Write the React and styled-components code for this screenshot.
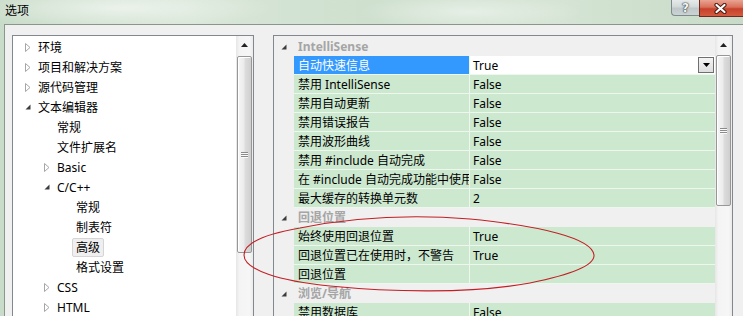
import React from 'react';
import styled, { createGlobalStyle } from 'styled-components';

const GlobalStyle = createGlobalStyle`
  html, body { margin: 0; padding: 0; overflow: hidden; }
  body {
    font-family: "Noto Sans", "Noto Sans CJK SC", sans-serif;
    font-size: 12px;
    color: #000;
  }
  * { box-sizing: border-box; }
`;

const Window = styled.div`
  position: relative;
  width: 743px;
  height: 316px;
  overflow: hidden;
  display: flex;
  flex-direction: column;
  background:
    radial-gradient(ellipse 220px 30px at 120px 8px, rgba(255,255,255,0.55), rgba(255,255,255,0) 70%),
    radial-gradient(ellipse 160px 26px at 470px 12px, rgba(255,255,255,0.45), rgba(255,255,255,0) 70%),
    linear-gradient(90deg, #c9dcc9 0%, #d8e6d7 25%, #cfe0cf 50%, #d5e4d4 75%, #c8dbc8 100%);
`;

const TitleBar = styled.div`
  height: 24px;
  flex: none;
  display: flex;
  align-items: flex-start;
`;

const Title = styled.div`
  padding: 3px 0 0 5px;
  font-size: 12px;
  line-height: 16px;
  color: #000;
`;

const CaptionButtons = styled.div`
  margin-left: auto;
  display: flex;
`;

const HelpButton = styled.div`
  width: 28px;
  height: 16px;
  border: 1px solid #7d8b8c;
  border-top: none;
  border-right: none;
  border-radius: 0 0 0 4px;
  background: linear-gradient(180deg, #e6eaea 0%, #d3d9da 45%, #bfc7c8 55%, #ccd3d4 100%);
  display: flex;
  align-items: center;
  justify-content: center;
  font-family: "DejaVu Sans", sans-serif;
  font-weight: bold;
  font-size: 12px;
  color: #f4f4f4;
  text-shadow: 0 0 1px #3a4546, 0 0 1px #3a4546, 0 0 2px #3a4546;
`;

const CloseButton = styled.div`
  width: 44px;
  height: 17px;
  border: 1px solid #6e2a1e;
  border-top: none;
  border-right: none;
  background: linear-gradient(180deg, #e9a493 0%, #d9705a 45%, #c6412a 55%, #d35b3f 100%);
  display: flex;
  align-items: center;
  justify-content: center;
  padding-right: 2px;
`;

const CloseGlyph = () => (
  <svg width="13" height="11" viewBox="0 0 13 11">
    <path d="M2.5 2 L10.5 9 M10.5 2 L2.5 9" stroke="#4a1a10" strokeWidth="4.2" strokeLinecap="round" />
    <path d="M2.5 2 L10.5 9 M10.5 2 L2.5 9" stroke="#fff" strokeWidth="2.2" strokeLinecap="round" />
  </svg>
);

const Client = styled.div`
  flex: 1;
  min-height: 0;
  margin-left: 4px;
  border-top: 1px solid #8a968a;
  border-left: 1px solid #8a968a;
  background: #f0f0f0;
  padding: 10px 0 0 7px;
  display: flex;
  gap: 19px;
  align-items: flex-start;
`;

const Panel = styled.div`
  flex: none;
  width: ${p => p.$width}px;
  height: 300px;
  border: 1px solid #828790;
  background: ${p => p.$bg};
  display: flex;
`;

/* ---------- Tree ---------- */

const TreeList = styled.div`
  flex: 1;
  padding-top: 1px;
`;

const TreeRow = styled.div`
  height: 20px;
  display: flex;
  align-items: center;
  padding-left: ${p => 12 + p.$level * 19}px;
  white-space: nowrap;
`;

const ArrowBox = styled.div`
  width: 9px;
  height: 20px;
  flex: none;
  display: flex;
  align-items: center;
`;

const TreeLabel = styled.span`
  display: inline-block;
  height: 19px;
  line-height: 17px;
  padding: 0 3px;
  border: 1px solid ${p => (p.$selected ? '#d5d5d5' : 'transparent')};
  border-radius: 2px;
  background: ${p => (p.$selected ? '#efefef' : 'transparent')};
`;

const ClosedArrow = () => (
  <svg width="6" height="9" viewBox="0 0 6 9">
    <path d="M0.5 0.5 L5 4.5 L0.5 8.5 Z" fill="#fff" stroke="#a6a6a6" strokeWidth="1" />
  </svg>
);

const OpenArrow = () => (
  <svg width="6" height="6" viewBox="0 0 6 6">
    <path d="M5.5 0.5 L5.5 5.5 L0.5 5.5 Z" fill="#3c3c3c" />
  </svg>
);

/* ---------- Scrollbar ---------- */

const ScrollBar = styled.div`
  width: 17px;
  flex: none;
  display: flex;
  flex-direction: column;
  align-items: center;
  background: linear-gradient(90deg, #e6e6e6 0%, #f4f4f4 20%, #f6f6f6 80%, #ebebeb 100%);
`;

const ScrollArrow = styled.div`
  width: 17px;
  height: 17px;
  flex: none;
  display: flex;
  align-items: center;
  justify-content: center;
`;

const Thumb = styled.div`
  width: 15px;
  flex: none;
  border: 1px solid #979797;
  border-radius: 2px;
  background: linear-gradient(90deg, #f6f6f6 0%, #ececec 45%, #dcdcdc 55%, #cfcfcf 100%);
  box-shadow: inset 1px 1px 0 #fff;
  display: flex;
  flex-direction: column;
  align-items: center;
  justify-content: center;
  gap: 1px;
`;

const GripLine = styled.div`
  width: 7px;
  height: 1px;
  background: #8a8a8a;
  box-shadow: 0 1px 0 #fafafa;
`;

const UpTriangle = () => (
  <svg width="7" height="4" viewBox="0 0 7 4">
    <path d="M3.5 0 L7 4 L0 4 Z" fill="#222" />
  </svg>
);

const VScroll = ({ gapTop, thumb }) => (
  <ScrollBar>
    <ScrollArrow>
      <UpTriangle />
    </ScrollArrow>
    <Thumb style={{ marginTop: gapTop, height: thumb }}>
      <GripLine />
      <GripLine />
      <GripLine />
    </Thumb>
  </ScrollBar>
);

/* ---------- Property grid ---------- */

const GridBody = styled.div`
  flex: 1;
  padding-top: 1px;
  overflow: hidden;
`;

const GridRow = styled.div`
  height: 19px;
  display: flex;
`;

const Margin = styled.div`
  width: 20px;
  flex: none;
  display: flex;
  align-items: center;
  padding-left: 7px;
`;

const CategoryName = styled.div`
  padding-left: 4px;
  line-height: 19px;
  color: #a5a5a5;
  font-weight: bold;
  white-space: nowrap;
`;

const NameCell = styled.div`
  width: 176px;
  flex: none;
  height: 19px;
  padding: 1px 0 0 4px;
  line-height: 17px;
  white-space: nowrap;
  overflow: hidden;
  border-right: 1px solid #eef7ee;
  border-bottom: 1px solid #eef7ee;
  background: ${p => (p.$selected ? '#3399ff' : '#cce8cf')};
  color: ${p => (p.$selected ? '#fff' : '#000')};
`;

const ValueCell = styled.div`
  flex: 1;
  height: 19px;
  padding: 1px 0 0 3px;
  line-height: 17px;
  display: flex;
  align-items: flex-start;
  white-space: nowrap;
  border-bottom: 1px solid #eef7ee;
  background: ${p => (p.$editing ? '#fff' : '#cce8cf')};
`;

const DropButton = styled.div`
  margin: 0 1px 0 auto;
  width: 16px;
  height: 16px;
  border: 1px solid #6f6f6f;
  background: linear-gradient(180deg, #f4f4f4, #dedede);
  display: flex;
  align-items: center;
  justify-content: center;
`;

const DownTriangle = () => (
  <svg width="7" height="4" viewBox="0 0 7 4">
    <path d="M0 0 L7 0 L3.5 4 Z" fill="#000" />
  </svg>
);

const Annotation = styled.svg`
  position: absolute;
  left: 0;
  top: 0;
  pointer-events: none;
`;

const tree = [
  { label: '环境', level: 0, arrow: 'closed' },
  { label: '项目和解决方案', level: 0, arrow: 'closed' },
  { label: '源代码管理', level: 0, arrow: 'closed' },
  { label: '文本编辑器', level: 0, arrow: 'open' },
  { label: '常规', level: 1 },
  { label: '文件扩展名', level: 1 },
  { label: 'Basic', level: 1, arrow: 'closed' },
  { label: 'C/C++', level: 1, arrow: 'open' },
  { label: '常规', level: 2 },
  { label: '制表符', level: 2 },
  { label: '高级', level: 2, selected: true },
  { label: '格式设置', level: 2 },
  { label: 'CSS', level: 1, arrow: 'closed' },
  { label: 'HTML', level: 1, arrow: 'closed' },
];

const grid = [
  {
    name: 'IntelliSense',
    rows: [
      { name: '自动快速信息', value: 'True', selected: true },
      { name: '禁用 IntelliSense', value: 'False' },
      { name: '禁用自动更新', value: 'False' },
      { name: '禁用错误报告', value: 'False' },
      { name: '禁用波形曲线', value: 'False' },
      { name: '禁用 #include 自动完成', value: 'False' },
      { name: '在 #include 自动完成功能中使用正斜杠', value: 'False' },
      { name: '最大缓存的转换单元数', value: '2' },
    ],
  },
  {
    name: '回退位置',
    rows: [
      { name: '始终使用回退位置', value: 'True' },
      { name: '回退位置已在使用时，不警告', value: 'True' },
      { name: '回退位置', value: '' },
    ],
  },
  {
    name: '浏览/导航',
    rows: [{ name: '禁用数据库', value: 'False' }],
  },
];

export default function App() {
  return (
    <>
      <GlobalStyle />
      <Window>
        <TitleBar>
          <Title>选项</Title>
          <CaptionButtons>
            <HelpButton>?</HelpButton>
            <CloseButton>
              <CloseGlyph />
            </CloseButton>
          </CaptionButtons>
        </TitleBar>
        <Client>
          <Panel $width={242} $bg="#fff">
            <TreeList>
              {tree.map((t, i) => (
                <TreeRow key={i} $level={t.level}>
                  <ArrowBox>
                    {t.arrow === 'closed' && <ClosedArrow />}
                    {t.arrow === 'open' && <OpenArrow />}
                  </ArrowBox>
                  <TreeLabel $selected={t.selected}>{t.label}</TreeLabel>
                </TreeRow>
              ))}
            </TreeList>
            <VScroll gapTop={3} thumb={197} />
          </Panel>
          <Panel $width={460} $bg="#f0f0f0">
            <GridBody>
              {grid.map((cat, ci) => (
                <React.Fragment key={ci}>
                  <GridRow>
                    <Margin>
                      <OpenArrow />
                    </Margin>
                    <CategoryName>{cat.name}</CategoryName>
                  </GridRow>
                  {cat.rows.map((r, ri) => (
                    <GridRow key={ri}>
                      <Margin />
                      <NameCell $selected={r.selected}>{r.name}</NameCell>
                      <ValueCell $editing={r.selected}>
                        {r.value}
                        {r.selected && (
                          <DropButton>
                            <DownTriangle />
                          </DropButton>
                        )}
                      </ValueCell>
                    </GridRow>
                  ))}
                </React.Fragment>
              ))}
            </GridBody>
            <VScroll gapTop={2} thumb={151} />
          </Panel>
        </Client>
        <Annotation width="743" height="316" viewBox="0 0 743 316">
          <path
            d="M594 255 C592 238 540 226 470 219 C420 215 360 216 300 228 C266 234 244 243 244 255 C244 270 280 281 330 286 C390 292 470 294 530 283 C570 275 595 266 594 255 Z"
            fill="none"
            stroke="#c41e24"
            strokeWidth="1.1"
          />
        </Annotation>
      </Window>
    </>
  );
}
